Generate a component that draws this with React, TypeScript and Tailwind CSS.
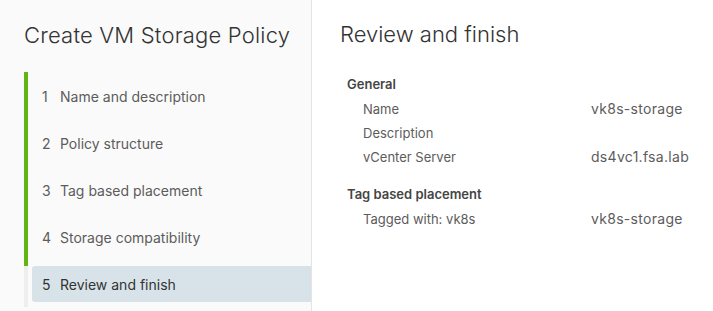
import React from 'react';

const steps = [
  'Name and description',
  'Policy structure',
  'Tag based placement',
  'Storage compatibility',
  'Review and finish',
];

const sections = [
  {
    title: 'General',
    rows: [
      ['Name', 'vk8s-storage'],
      ['Description', ''],
      ['vCenter Server', 'ds4vc1.fsa.lab'],
    ],
  },
  {
    title: 'Tag based placement',
    rows: [['Tagged with: vk8s', 'vk8s-storage']],
  },
];

export default function App() {
  const current = 4;
  return (
    <div className="flex w-[713px] h-[311px] bg-white overflow-hidden text-[#5c5c5c] font-['Inter','Lato',sans-serif]">
      {/* sidebar */}
      <div className="w-[312px] shrink-0 bg-[#fafafa] border-r border-[#e4e4e4] pl-6 pt-[18px]">
        <h1 className="text-[22px] font-light text-[#333] leading-[34px] tracking-[0.2px]">Create VM Storage Policy</h1>
        <div className="mt-5 flex flex-col">
          {steps.map((s, i) => {
            const done = i < current;
            const active = i === current;
            return (
              <div key={s} className={`flex border-l-4 ${done ? 'border-[#60b515]' : 'border-[#eeeeee]'} ${i === 0 ? 'pt-[6px]' : ''}`}>
                <div className={`flex-1 ml-1 h-[36px] flex items-center pl-[10px] text-[14px] rounded-l-[3px] ${active ? 'bg-[#d8e3e9] text-[#333]' : ''} ${i < steps.length - 1 ? 'mb-[11px]' : 'mb-[5px]'}`}>
                  <span className="w-[18px]">{i + 1}</span>
                  <span>{s}</span>
                </div>
              </div>
            );
          })}
        </div>
      </div>
      {/* content */}
      <div className="flex-1 pl-[28px] pt-[17px]">
        <h2 className="text-[22px] font-light text-[#333] leading-[34px]">Review and finish</h2>
        <div className="mt-[21px] pl-[7px] text-[13px]">
          {sections.map((sec) => (
            <div key={sec.title} className="mb-[14px]">
              <div className="font-semibold text-[#454545] leading-[24px]">{sec.title}</div>
              {sec.rows.map(([k, v]) => (
                <div key={k} className="flex items-baseline h-[24px] leading-[24px] pt-[1px]">
                  <span className="pl-4 w-[244px]">{k}</span>
                  <span className="text-[14px] tracking-[0.3px]">{v}</span>
                </div>
              ))}
            </div>
          ))}
        </div>
      </div>
    </div>
  );
}
